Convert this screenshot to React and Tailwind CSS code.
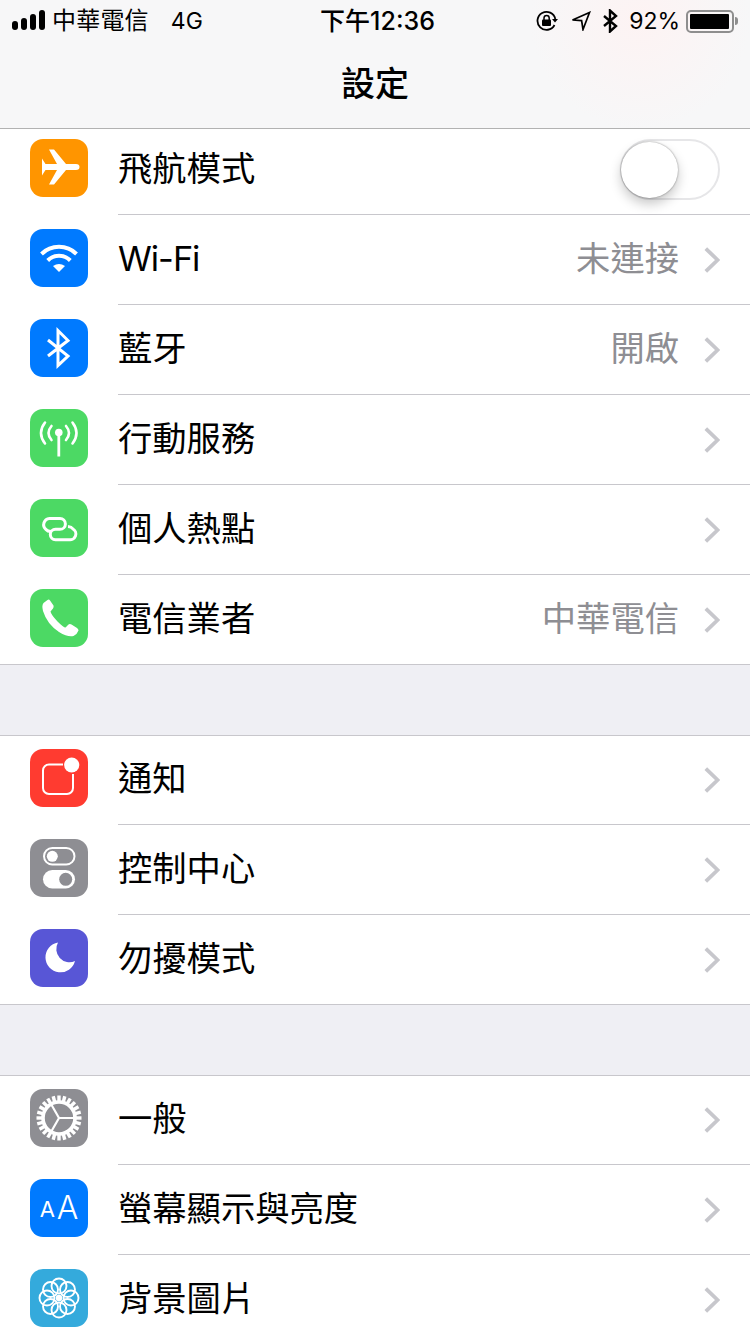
import React from "react";

const FONT = "font-['Inter','Noto_Sans_CJK_TC',sans-serif]";

function Plane() {
  return <path fill="white" d="M12 19.5 L15.5 25 H27 L19 10.5 H24 L36 25 H46 Q49.5 25 49.5 28 Q49.5 31 46 31 H36 L24 45.5 H19 L27 31 H15.5 L12 36.5 Z" />;
}

function Wifi() {
  return (
    <g fill="none" stroke="white" strokeWidth="4">
      <path d="M11.5 25 A25 25 0 0 1 46.5 25" />
      <path d="M17.7 31.5 A16 16 0 0 1 40.3 31.5" />
      <path fill="white" stroke="none" d="M29 43 L23 37 Q29 33 35 37 Z" />
    </g>
  );
}

function Bluetooth() {
  return <path fill="none" stroke="white" strokeWidth="3" d="M18 21 L38 37 L28 46.5 V11.5 L38 21.5 L18 37" />;
}

function Antenna() {
  return (
    <g fill="none" stroke="white" strokeWidth="2.6" strokeLinecap="round">
      <circle cx="28.8" cy="23.5" r="3.8" fill="white" stroke="none" />
      <path d="M28.8 24 V47.5" strokeWidth="2.8" strokeLinecap="butt" />
      <path d="M15 13.5 Q7 24 15 34.5" />
      <path d="M21.5 17 Q15.5 24 21.5 31" />
      <path d="M42.5 13.5 Q50.5 24 42.5 34.5" />
      <path d="M36 17 Q42 24 36 31" />
    </g>
  );
}

function Hotspot() {
  return (
    <path
      fill="none"
      stroke="white"
      strokeWidth="3"
      d="M21 32.5 Q17.5 32.5 16 30.5 A6.2 6.2 0 0 1 19.5 19.5 H30 A5.4 5.4 0 0 1 30 30.3 H25.5 A5.2 5.2 0 0 0 25.5 40.7 H39 A5.8 5.8 0 0 0 43 30 Q41.5 27.8 38 27.6"
    />
  );
}

function Phone() {
  return <path fill="white" d="M17.5 11 L13.5 14 Q11.5 16.5 13 22 Q17 35 29 43 Q38 48.5 43.5 47 Q47 45.5 48.5 41.5 Q48.5 40 47 39 L41.5 35.5 Q39.5 34.5 38 36 L35.5 38.5 Q33.5 38.5 27.5 32.5 Q21 25.5 20.5 22.5 L23 19.5 Q24 18 23.5 16.5 L20 11.5 Q19 10 17.5 11 Z" />;
}

function Notify() {
  return (
    <g fill="none" stroke="white" strokeWidth="2">
      <path d="M33 15.5 H19 A6 6 0 0 0 13 21.5 V39 A6 6 0 0 0 19 45 H37 A6 6 0 0 0 43 39 V25" />
      <circle cx="41.7" cy="16" r="7.6" fill="white" stroke="none" />
    </g>
  );
}

function Toggles() {
  return (
    <g>
      <rect x="14" y="9" width="30.5" height="16.5" rx="8.25" fill="none" stroke="white" strokeWidth="2" />
      <circle cx="22.3" cy="17.3" r="5.5" fill="white" />
      <rect x="13" y="31" width="32" height="18.5" rx="9.25" fill="white" />
      <circle cx="35.7" cy="40.3" r="6.5" fill="#8e8e93" />
    </g>
  );
}

function Moon() {
  return <path fill="white" d="M28 13.5 A15 15 0 1 0 45 32 A13.2 13.2 0 0 1 28 13.5 Z" />;
}

const TEETH = Array.from({ length: 24 }, (_, i) => i * 15);

function Gear() {
  return (
    <g fill="none" stroke="white">
      {TEETH.map((a) => (
        <rect key={a} x="27.3" y="6.5" width="3.4" height="6.5" fill="white" stroke="none" transform={`rotate(${a} 29 29)`} />
      ))}
      <circle cx="29" cy="29" r="16" strokeWidth="3.6" />
      <path strokeWidth="2.2" d="M29 29 H45 M29 29 L21 15 M29 29 L21 43" />
    </g>
  );
}

const PETALS = [0, 45, 90, 135, 180, 225, 270, 315];

function Flower() {
  return (
    <g fill="none" stroke="white" strokeWidth="1.9">
      {PETALS.map((a) => (
        <circle key={a} cx="29" cy="17" r="7.5" transform={`rotate(${a} 29 29)`} />
      ))}
      <circle cx="29" cy="29" r="3.2" fill="white" stroke="none" />
    </g>
  );
}

function TextSize() {
  return (
    <div className="flex h-full w-full items-baseline justify-center pt-[10px] font-['Inter',sans-serif] font-light leading-[38px] text-white">
      <span className="mr-[2px] -translate-y-[2px] text-[22px] font-normal">A</span>
      <span className="text-[32px]">A</span>
    </div>
  );
}

function Icon({ bg, children, custom }) {
  return (
    <div className={`h-[58px] w-[58px] shrink-0 overflow-hidden rounded-[13px] ${bg}`}>
      {custom ? (
        custom
      ) : (
        <svg width="58" height="58" viewBox="0 0 58 58">
          {children}
        </svg>
      )}
    </div>
  );
}

function Chevron() {
  return (
    <svg width="16" height="26" viewBox="0 0 16 26" className="mt-[3px] shrink-0">
      <path d="M1.8 1.6 L13.6 13 L1.8 24.4" fill="none" stroke="#c7c7cc" strokeWidth="3.8" />
    </svg>
  );
}

function Toggle() {
  return (
    <div className="relative mt-[3px] h-[61px] w-[100px] rounded-full border-2 border-[#e6e6e8] bg-white">
      <div className="absolute left-[-1px] top-[1px] h-[56px] w-[57px] rounded-full bg-white shadow-[0_6px_12px_rgba(0,0,0,0.22),0_0_2px_rgba(0,0,0,0.45)]" />
    </div>
  );
}

function Row({ icon, label, value, toggle, last, rowClass }) {
  return (
    <div className={`flex pl-[30px] ${rowClass}`}>
      {icon}
      <div className={`ml-[30px] flex min-w-0 flex-1 items-start pr-[30px] ${last ? "" : "border-b border-[#c8c7cc]"}`}>
        <div className="flex h-[58px] w-full items-center">
          <span className="flex-1 pt-[2px] text-[34.3px] leading-[58px] text-black">{label}</span>
          {toggle ? (
            <Toggle />
          ) : (
            <>
              {value && <span className="mr-[25px] pt-[2px] text-[34.3px] leading-[58px] text-[#8e8e93]">{value}</span>}
              <Chevron />
            </>
          )}
        </div>
      </div>
    </div>
  );
}

function StatusBar() {
  return (
    <div className="flex h-[42px] items-center px-[12px] text-black">
      <div className="flex flex-1 items-center">
        <div className="mt-[-2px] flex items-end gap-[3px]">
          <div className="h-[9px] w-[6px] rounded-full bg-black" />
          <div className="h-[12px] w-[6px] rounded-full bg-black" />
          <div className="h-[16px] w-[6px] rounded-full bg-black" />
          <div className="h-[20px] w-[6px] rounded-full bg-black" />
        </div>
        <span className="ml-[7px] text-[24px] tracking-[0.2px] leading-[42px]">中華電信</span>
        <span className="ml-[22px] text-[23px] leading-[42px]">4G</span>
      </div>
      <span className="ml-[5px] text-[25px] font-medium leading-[42px]">下午12:36</span>
      <div className="flex flex-1 items-center justify-end">
        <svg width="22" height="22" viewBox="0 0 22 22" className="mr-[13px]">
          <path d="M18.5 15 A9 9 0 1 1 19.3 9" fill="none" stroke="black" strokeWidth="1.8" />
          <path d="M16 9 H22 L19 12.5 Z" fill="black" />
          <rect x="6" y="9.5" width="9" height="6.5" rx="1" fill="black" />
          <path d="M8 10 V8 A2.6 2.6 0 0 1 13.2 8 V10" fill="none" stroke="black" strokeWidth="1.5" />
        </svg>
        <svg width="20" height="20" viewBox="0 0 20 20" className="mr-[11px]">
          <path d="M1.5 9 L18.5 1.5 L12 18.5 L10.6 9.6 Z" fill="none" stroke="black" strokeWidth="1.7" />
        </svg>
        <svg width="16" height="24" viewBox="0 0 16 24" className="mr-[11px]">
          <path d="M2 7 L14 17 L8 22.5 V1.5 L14 7 L2 17" fill="none" stroke="black" strokeWidth="2.4" />
        </svg>
        <span className="mr-[6px] text-[23px] leading-[42px]">92%</span>
        <div className="flex items-center">
          <div className="flex h-[23px] w-[48px] items-center rounded-[5px] border-2 border-[#8e8e8e] p-[2px]">
            <div className="h-full w-[39px] rounded-[1px] bg-black" />
          </div>
          <div className="ml-[1px] h-[8px] w-[3px] rounded-r-full bg-[#8e8e8e]" />
        </div>
      </div>
    </div>
  );
}

export default function App() {
  return (
    <div className={`h-[1334px] w-[750px] overflow-hidden bg-[#efeff4] ${FONT}`}>
      {/* Nav bar */}
      <header className="h-[129px] border-b border-[#b2b2b2] bg-[radial-gradient(circle_at_640px_20px,#fdf3f3_0,#f7f7f8_110px)]">
        <StatusBar />
        <h1 className="text-center text-[34px] font-medium leading-[84px] text-black">設定</h1>
      </header>

      {/* Connectivity */}
      <section className="border-b border-[#c8c7cc] bg-white">
        <Row rowClass="h-[86px] pt-[10px]" icon={<Icon bg="bg-[#ff9500]"><Plane /></Icon>} label="飛航模式" toggle />
        <Row rowClass="h-[90px] pt-[14px]" icon={<Icon bg="bg-[#007aff]"><Wifi /></Icon>} label={<span className="tracking-[-1px]">Wi-Fi</span>} value="未連接" />
        <Row rowClass="h-[90px] pt-[14px]" icon={<Icon bg="bg-[#007aff]"><Bluetooth /></Icon>} label="藍牙" value="開啟" />
        <Row rowClass="h-[90px] pt-[14px]" icon={<Icon bg="bg-[#4cd964]"><Antenna /></Icon>} label="行動服務" />
        <Row rowClass="h-[90px] pt-[14px]" icon={<Icon bg="bg-[#4cd964]"><Hotspot /></Icon>} label="個人熱點" />
        <Row rowClass="h-[89px] pt-[14px]" icon={<Icon bg="bg-[#4cd964]"><Phone /></Icon>} label="電信業者" value="中華電信" last />
      </section>

      {/* Notifications */}
      <section className="mt-[70px] border-y border-[#c8c7cc] bg-white">
        <Row rowClass="h-[89px] pt-[13px]" icon={<Icon bg="bg-[#ff3b30]"><Notify /></Icon>} label="通知" />
        <Row rowClass="h-[90px] pt-[14px]" icon={<Icon bg="bg-[#8e8e93]"><Toggles /></Icon>} label="控制中心" />
        <Row rowClass="h-[89px] pt-[14px]" icon={<Icon bg="bg-[#5856d6]"><Moon /></Icon>} label="勿擾模式" last />
      </section>

      {/* General */}
      <section className="mt-[70px] border-t border-[#c8c7cc] bg-white">
        <Row rowClass="h-[89px] pt-[13px]" icon={<Icon bg="bg-[#8e8e93]"><Gear /></Icon>} label="一般" />
        <Row rowClass="h-[90px] pt-[14px]" icon={<Icon bg="bg-[#007aff]" custom={<TextSize />} />} label="螢幕顯示與亮度" />
        <Row rowClass="h-[90px] pt-[14px]" icon={<Icon bg="bg-[#34aadc]"><Flower /></Icon>} label="背景圖片" last />
      </section>
    </div>
  );
}
